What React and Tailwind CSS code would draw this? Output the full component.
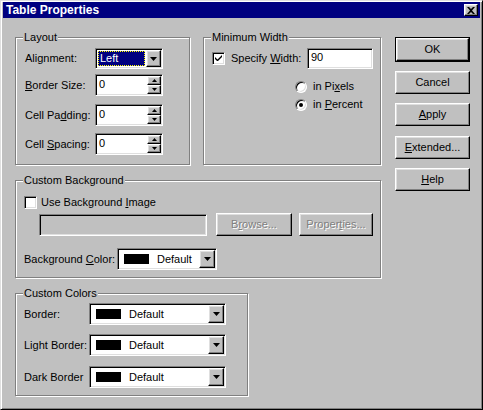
import React from 'react';

const sunken =
  'border border-t-[#808080] border-l-[#808080] border-b-white border-r-white shadow-[inset_1px_1px_0_#000,inset_-1px_-1px_0_#dfdfdf]';
const raised =
  'border border-t-white border-l-white border-b-black border-r-black shadow-[inset_-1px_-1px_0_#808080,inset_1px_1px_0_#dfdfdf]';

const DownArrow = () => (
  <svg width="7" height="4" viewBox="0 0 7 4">
    <path d="M0 0h7L3.5 4z" fill="#000" />
  </svg>
);

const Group = ({ label, className, children }) => (
  <div className={`relative border border-[#808080] shadow-[1px_1px_0_#fff,inset_1px_1px_0_#fff] ${className}`}>
    <span className="absolute -top-[8px] left-[7px] px-[1px] bg-[#c0c0c0] leading-[14px]">{label}</span>
    {children}
  </div>
);

const Spin = () => (
  <div className={`${sunken} w-[68px] h-[22px] bg-white flex items-stretch p-[1px]`}>
    <span className="flex-1 pl-[2px] leading-[16px]">0</span>
    <div className="flex flex-col w-[14px]">
      <div className={`${raised} flex-1 bg-[#c0c0c0] flex items-center justify-center`}>
        <svg width="5" height="3" viewBox="0 0 5 3"><path d="M2.5 0L5 3H0z" fill="#000" /></svg>
      </div>
      <div className={`${raised} flex-1 bg-[#c0c0c0] flex items-center justify-center`}>
        <svg width="5" height="3" viewBox="0 0 5 3"><path d="M0 0h5L2.5 3z" fill="#000" /></svg>
      </div>
    </div>
  </div>
);

const ColorCombo = ({ width }) => (
  <div className={`${sunken} ${width} h-[22px] bg-white flex items-stretch p-[1px]`}>
    <div className="flex-1 flex items-center">
      <span className="ml-[5px] w-[25px] h-[10px] bg-black" />
      <span className="ml-[8px]">Default</span>
    </div>
    <div className={`${raised} w-[16px] bg-[#c0c0c0] flex items-center justify-center`}>
      <DownArrow />
    </div>
  </div>
);

const Button = ({ children, className = '', disabled }) => (
  <div
    className={`${raised} h-[23px] bg-[#c0c0c0] flex items-center justify-center ${className} ${
      disabled ? 'text-[#808080] [text-shadow:1px_1px_0_#fff]' : ''
    }`}
  >
    {children}
  </div>
);

const Checkbox = ({ checked }) => (
  <div className={`${sunken} w-[13px] h-[13px] bg-white flex items-center justify-center`}>
    {checked && (
      <svg width="7" height="7" viewBox="0 0 7 7">
        <path d="M0 2v2l2 2h1l4-4V0L2.5 4.5z" fill="#000" />
      </svg>
    )}
  </div>
);

const Radio = ({ checked }) => (
  <div
    className={`w-[12px] h-[12px] rounded-full border border-t-[#808080] border-l-[#808080] border-b-white border-r-white shadow-[inset_1px_1px_0_#000,inset_-1px_-1px_0_#dfdfdf] bg-white flex items-center justify-center`}
  >
    {checked && <span className="w-[4px] h-[4px] rounded-full bg-black" />}
  </div>
);

export default function App() {
  return (
    <div className="w-[483px] h-[410px] bg-[#c0c0c0] text-[11px] leading-[13px] text-black font-['Liberation_Sans',Arial,sans-serif] border border-t-[#dfdfdf] border-l-[#dfdfdf] border-b-black border-r-black shadow-[inset_1px_1px_0_#fff,inset_-1px_-1px_0_#808080] pt-[1px] px-[2px]">
      {/* title bar */}
      <div className="h-[16px] bg-[#000080] flex items-center justify-between pl-[3px] pr-[2px]">
        <span className="text-white font-bold text-[12px] leading-[14px]">Table Properties</span>
        <div className={`${raised} w-[14px] h-[12px] bg-[#c0c0c0] flex items-center justify-center`}>
          <svg width="8" height="7" viewBox="0 0 8 7">
            <path d="M0 0h2l2 2 2-2h2L5 3.5 8 7H6L4 5 2 7H0l3-3.5z" fill="#000" />
          </svg>
        </div>
      </div>

      <div className="flex pl-[12px]">
        {/* left column */}
        <div className="w-[366px] flex flex-col">
          <div className="flex gap-[13px] mt-[19px]">
            <Group label="Layout" className="w-[175px] h-[128px] pl-[9px] pt-[10px]">
              <div className="flex items-center h-[21px]">
                <span className="w-[70px]">Alignment:</span>
                <div className={`${sunken} w-[68px] h-[21px] bg-white flex items-stretch p-[1px]`}>
                  <div className="flex-1 p-[1px]">
                    <div className="h-full bg-[#000080] text-white outline-1 outline-dotted outline-[#ffff00] -outline-offset-1 pl-[2px] leading-[15px]">
                      Left
                    </div>
                  </div>
                  <div className={`${raised} w-[15px] bg-[#c0c0c0] flex items-center justify-center`}>
                    <DownArrow />
                  </div>
                </div>
              </div>
              <div className="flex items-center mt-[5px]">
                <span className="w-[70px]"><u>B</u>order Size:</span>
                <Spin />
              </div>
              <div className="flex items-center mt-[8px]">
                <span className="w-[70px]">Cell Pa<u>d</u>ding:</span>
                <Spin />
              </div>
              <div className="flex items-center mt-[7px]">
                <span className="w-[70px]">Cell <u>S</u>pacing:</span>
                <Spin />
              </div>
            </Group>

            <Group label="Minimum Width" className="w-[178px] h-[128px] pl-[8px] pr-[7px] pt-[10px]">
              <div className="flex items-center h-[21px]">
                <Checkbox checked />
                <span className="ml-[6px]">Specify <u>W</u>idth:</span>
                <div className={`${sunken} ml-auto w-[66px] h-[21px] bg-white pl-[3px] leading-[17px]`}>90</div>
              </div>
              <div className="flex items-center ml-[83px] mt-[11px]">
                <Radio />
                <span className="ml-[6px]">in Pi<u>x</u>els</span>
              </div>
              <div className="flex items-center ml-[83px] mt-[5px]">
                <Radio checked />
                <span className="ml-[6px]">in <u>P</u>ercent</span>
              </div>
            </Group>
          </div>

          <Group label="Custom Background" className="mt-[15px] h-[98px] pl-[8px] pt-[15px]">
            <div className="flex items-center">
              <Checkbox />
              <span className="ml-[4px]">Use Background <u>I</u>mage</span>
            </div>
            <div className="flex items-center mt-[4px]">
              <div className={`${sunken} ml-[15px] w-[168px] h-[22px] bg-[#c0c0c0]`} />
              <Button disabled className="ml-[9px] w-[76px]">B<u>r</u>owse...</Button>
              <Button disabled className="ml-[7px] w-[74px]">Proper<u>t</u>ies...</Button>
            </div>
            <div className="flex items-center mt-[12px]">
              <span className="w-[93px]">Background <u>C</u>olor:</span>
              <ColorCombo width="w-[100px]" />
            </div>
          </Group>

          <Group label="Custom Colors" className="mt-[15px] w-[233px] h-[103px] pl-[8px] pt-[9px]">
            <div className="flex items-center">
              <span className="w-[65px]">Border:</span>
              <ColorCombo width="w-[137px]" />
            </div>
            <div className="flex items-center mt-[9px]">
              <span className="w-[65px]">Light Border:</span>
              <ColorCombo width="w-[137px]" />
            </div>
            <div className="flex items-center mt-[10px]">
              <span className="w-[65px]">Dark Border</span>
              <ColorCombo width="w-[137px]" />
            </div>
          </Group>
        </div>

        {/* right column */}
        <div className="ml-[14px] w-[75px] flex flex-col mt-[19px]">
          <div className="border border-black">
            <Button className="h-[21px]">OK</Button>
          </div>
          <Button className="mt-[9px]">Cancel</Button>
          <Button className="mt-[9px]"><u>A</u>pply</Button>
          <Button className="mt-[10px]"><u>E</u>xtended...</Button>
          <Button className="mt-[9px]"><u>H</u>elp</Button>
        </div>
      </div>
    </div>
  );
}
